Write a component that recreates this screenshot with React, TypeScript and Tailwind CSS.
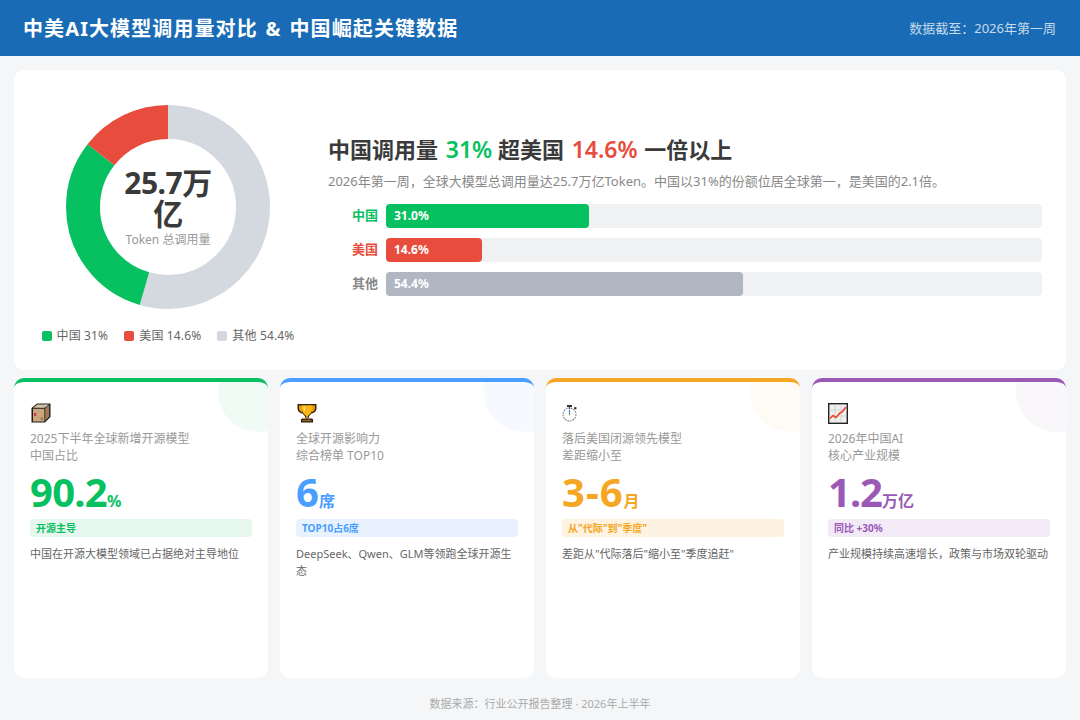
function BoxIcon() {
  return (
    <svg width="22" height="22" viewBox="0 0 22 22">
      <path d="M1.5 6 L7 1.5 H20.5 V15 L15 20.5 H1.5 Z" fill="#1c1c1c" />
      <path d="M3.2 5.8 L7.5 2.6 H19 L14.8 5.8 Z" fill="#dcc0a0" />
      <path d="M10.5 5.8 L14.6 2.6 H16.5 L12.5 5.8 Z" fill="#a8b8c6" />
      <path d="M3 6.8 H14.4 V19.4 H3 Z" fill="#cba57c" />
      <path d="M15.2 6.2 L19.2 3 V14.6 L15.2 18.8 Z" fill="#a07a52" />
      <rect x="4" y="11" width="2.2" height="3" fill="#d9304f" />
      <rect x="10.5" y="15.5" width="2.5" height="2.5" fill="#a07a52" />
    </svg>
  );
}

function TrophyIcon() {
  return (
    <svg width="22" height="22" viewBox="0 0 22 22">
      <path d="M1.5 2 H20.5 V6.5 C20.5 9.5 18 11 15.5 11.5 C14.5 13 13 13.8 12.8 15 V16 H9.2 V15 C9 13.8 7.5 13 6.5 11.5 C4 11 1.5 9.5 1.5 6.5 Z" fill="#3a2508" />
      <path d="M3 3.4 H19 V6.4 C19 8.4 17.2 9.6 15.4 10 C15.7 8 16 6 16 5 H6 C6 6 6.3 8 6.6 10 C4.8 9.6 3 8.4 3 6.4 Z" fill="#e89c10" />
      <path d="M5.6 3.4 H16.4 C16.4 7 15.8 10 14.4 11.5 C13 13 11.8 13.6 11.6 15 H10.4 C10.2 13.6 9 13 7.6 11.5 C6.2 10 5.6 7 5.6 3.4 Z" fill="#fbb614" />
      <path d="M7.4 4.6 H9 V9 H8.2 C7.6 8 7.4 6.4 7.4 4.6 Z" fill="#ffe08a" />
      <path d="M10.2 15 H11.8 V17 H10.2 Z" fill="#e89c10" />
      <path d="M6 16.5 H16 L17 17.5 V20.5 H5 V17.5 Z" fill="#2e1c08" />
      <path d="M6.5 17.8 H15.5 V19.2 H6.5 Z" fill="#9c6426" />
    </svg>
  );
}

function StopwatchIcon() {
  return (
    <svg width="16" height="18" viewBox="0 0 16 18">
      <circle cx="7.5" cy="10.5" r="6.5" fill="#fff" stroke="#8a8a8a" strokeWidth="1.1" strokeDasharray="1.8 0.8" />
      <rect x="5" y="1" width="5" height="2" fill="#333" />
      <rect x="7" y="3" width="1.2" height="2" fill="#555" />
      <rect x="12.2" y="3.2" width="2.2" height="2" fill="#222" />
      <path d="M7.5 5.5 V11" stroke="#3b8ad9" strokeWidth="1.2" />
      <path d="M7.5 10 V11.5" stroke="#e0a040" strokeWidth="1.2" />
    </svg>
  );
}

function ChartIcon() {
  return (
    <svg width="20" height="21" viewBox="0 0 20 21">
      <rect x="0.7" y="0.7" width="18.6" height="19.6" fill="#efefef" stroke="#222" strokeWidth="1.4" />
      <path d="M7 1.5 V19.5 M13 1.5 V19.5 M1.5 7 H18.5 M1.5 13 H18.5" stroke="#cfcfcf" strokeWidth="0.8" />
      <path d="M2 15.5 L5 12.5 L8 14.5 L12 10 L14 9 L18 4" fill="none" stroke="#f0452d" strokeWidth="1.6" />
    </svg>
  );
}

const cards = [
  {
    icon: <BoxIcon />,
    title: ["2025下半年全球新增开源模型", "中国占比"],
    value: "90.2",
    unit: "%",
    tag: "开源主导",
    desc: "中国在开源大模型领域已占据绝对主导地位",
    border: "border-[#07c160]",
    text: "text-[#07c160]",
    tagBg: "bg-[#e6f7ed]",
    circle: "bg-[#07c160]/[0.06]",
    spacing: "tracking-[-0.75px]",
  },
  {
    icon: <TrophyIcon />,
    title: ["全球开源影响力", "综合榜单 TOP10"],
    value: "6",
    unit: "席",
    tag: "TOP10占6席",
    desc: "DeepSeek、Qwen、GLM等领跑全球开源生态",
    border: "border-[#4a9eff]",
    text: "text-[#4a9eff]",
    tagBg: "bg-[#e8f2ff]",
    circle: "bg-[#4a9eff]/[0.05]",
    spacing: "",
  },
  {
    icon: <StopwatchIcon />,
    title: ["落后美国闭源领先模型", "差距缩小至"],
    value: "3-6",
    unit: "月",
    tag: '从"代际"到"季度"',
    desc: '差距从"代际落后"缩小至"季度追赶"',
    border: "border-[#f5a623]",
    text: "text-[#f5a623]",
    tagBg: "bg-[#fef3e2]",
    circle: "bg-[#f5a623]/[0.05]",
    spacing: "tracking-[1px]",
  },
  {
    icon: <ChartIcon />,
    title: ["2026年中国AI", "核心产业规模"],
    value: "1.2",
    unit: "万亿",
    tag: "同比 +30%",
    desc: "产业规模持续高速增长，政策与市场双轮驱动",
    border: "border-[#9b59b6]",
    text: "text-[#9b59b6]",
    tagBg: "bg-[#f3eaf8]",
    circle: "bg-[#9b59b6]/[0.05]",
    spacing: "tracking-[-1px]",
  },
];

const bars = [
  { label: "中国", value: "31.0%", width: "31%", labelColor: "text-[#07c160]", bar: "bg-[#07c160]" },
  { label: "美国", value: "14.6%", width: "14.6%", labelColor: "text-[#e74c3c]", bar: "bg-[#e74c3c]" },
  { label: "其他", value: "54.4%", width: "54.4%", labelColor: "text-[#888888]", bar: "bg-[#b0b7c3]" },
];

const legend = [
  { label: "中国 31%", color: "bg-[#07c160]" },
  { label: "美国 14.6%", color: "bg-[#e74c3c]" },
  { label: "其他 54.4%", color: "bg-[#d4d8df]" },
];

function Donut() {
  const r = 85;
  const c = 2 * Math.PI * r;
  const segs = [
    { color: "#d4d8df", pct: 54.4, start: 0 },
    { color: "#07c160", pct: 31, start: 54.4 },
    { color: "#e74c3c", pct: 14.6, start: 85.4 },
  ];
  return (
    <div className="relative w-[204px] h-[204px]">
      <svg width="204" height="204" viewBox="0 0 204 204" className="-rotate-90">
        {segs.map((s) => (
          <circle
            key={s.color}
            cx="102"
            cy="102"
            r={r}
            fill="none"
            stroke={s.color}
            strokeWidth="34"
            strokeDasharray={`${(s.pct / 100) * c} ${c}`}
            strokeDashoffset={(-s.start / 100) * c}
          />
        ))}
      </svg>
      <div className="absolute inset-0 flex flex-col items-center justify-center">
        <div className="w-[100px] text-center text-[30px] leading-[31px] tracking-[-0.5px] font-bold text-[#3a3a3a]">25.7万亿</div>
        <div className="mt-[3px] text-[12px] leading-[16px] text-[#999999]">Token 总调用量</div>
      </div>
    </div>
  );
}

export default function App() {
  return (
    <div className="w-[1080px] h-[720px] overflow-hidden flex flex-col bg-[#f4f6f8] font-['Noto_Sans','Noto_Sans_CJK_SC',sans-serif]">
      <header className="h-14 shrink-0 flex items-center justify-between px-6 bg-[#1a6bb5] text-white">
        <h1 className="pt-[1px] -ml-[1px] text-[20px] font-bold tracking-[1.1px] [word-spacing:1.5px]">中美AI大模型调用量对比 &amp; 中国崛起关键数据</h1>
        <span className="pt-[1px] text-[13px] text-white/75">数据截至：2026年第一周</span>
      </header>

      <main className="flex-1 flex flex-col gap-2 px-[14px] pt-[14px]">
        <section className="h-[300px] shrink-0 flex items-center gap-[30px] rounded-[10px] bg-white px-6">
          <div className="w-[260px] shrink-0 flex flex-col items-center gap-[18px] pt-[10px]">
            <Donut />
            <div className="flex items-center gap-4 text-[12px] tracking-[0.15px] text-[#666666]">
              {legend.map((l) => (
                <div key={l.label} className="flex items-center gap-[5px]">
                  <span className={`w-[10px] h-[10px] rounded-[2px] ${l.color}`} />
                  {l.label}
                </div>
              ))}
            </div>
          </div>

          <div className="flex-1 min-w-0 pb-[11px]">
            <h2 className="text-[22px] leading-[30px] font-bold text-[#3a3a3a]">
              中国调用量 <span className="ml-[2px] text-[23px] font-semibold text-[#07c160]">31%</span> 超美国 <span className="ml-[2px] mr-[1px] text-[23px] font-semibold text-[#e74c3c]">14.6%</span> 一倍以上
            </h2>
            <p className="mt-[7px] text-[13px] leading-[20px] text-[#888888]">
              2026年第一周，全球大模型总调用量达25.7万亿Token。中国以31%的份额位居全球第一，是美国的2.1倍。
            </p>
            <div className="mt-[13px] flex flex-col gap-[10px]">
              {bars.map((b) => (
                <div key={b.label} className="flex items-center gap-2">
                  <span className={`w-[50px] text-right text-[13px] font-bold ${b.labelColor}`}>{b.label}</span>
                  <div className="flex-1 h-6 rounded-[4px] bg-[#f0f1f3]">
                    <div
                      className={`h-full rounded-[4px] pl-2 flex items-center text-[12px] font-bold text-white ${b.bar}`}
                      style={{ width: b.width }}
                    >
                      {b.value}
                    </div>
                  </div>
                </div>
              ))}
            </div>
          </div>
        </section>

        <section className="h-[300px] shrink-0 grid grid-cols-4 gap-3">
          {cards.map((card) => (
            <div
              key={card.value}
              className={`relative overflow-hidden rounded-[10px] border-t-4 bg-white px-4 pt-[20px] ${card.border}`}
            >
              <div className={`absolute -top-[30px] -right-[30px] w-20 h-20 rounded-full ${card.circle}`} />
              <div className="h-[22px] flex items-center">{card.icon}</div>
              <div className="mt-[6px] text-[12px] leading-[17px] text-[#999999]">
                {card.title.map((t) => (
                  <div key={t}>{t}</div>
                ))}
              </div>
              <div className={`mt-[3px] font-bold ${card.text}`}>
                <span className={`text-[40px] leading-[50px] ${card.spacing}`}>{card.value}</span>
                <span className="text-[16px]">{card.unit}</span>
              </div>
              <div className={`mt-[2px] h-[18px] rounded-[4px] px-[6px] flex items-center text-[10px] font-bold ${card.tagBg} ${card.text}`}>
                {card.tag}
              </div>
              <p className="mt-[8px] text-[11px] leading-[17px] text-[#666666]">{card.desc}</p>
            </div>
          ))}
        </section>

        <footer className="mt-[10px] text-center text-[11px] leading-[16px] text-[#aaaaaa]">
          数据来源：行业公开报告整理 · 2026年上半年
        </footer>
      </main>
    </div>
  );
}
